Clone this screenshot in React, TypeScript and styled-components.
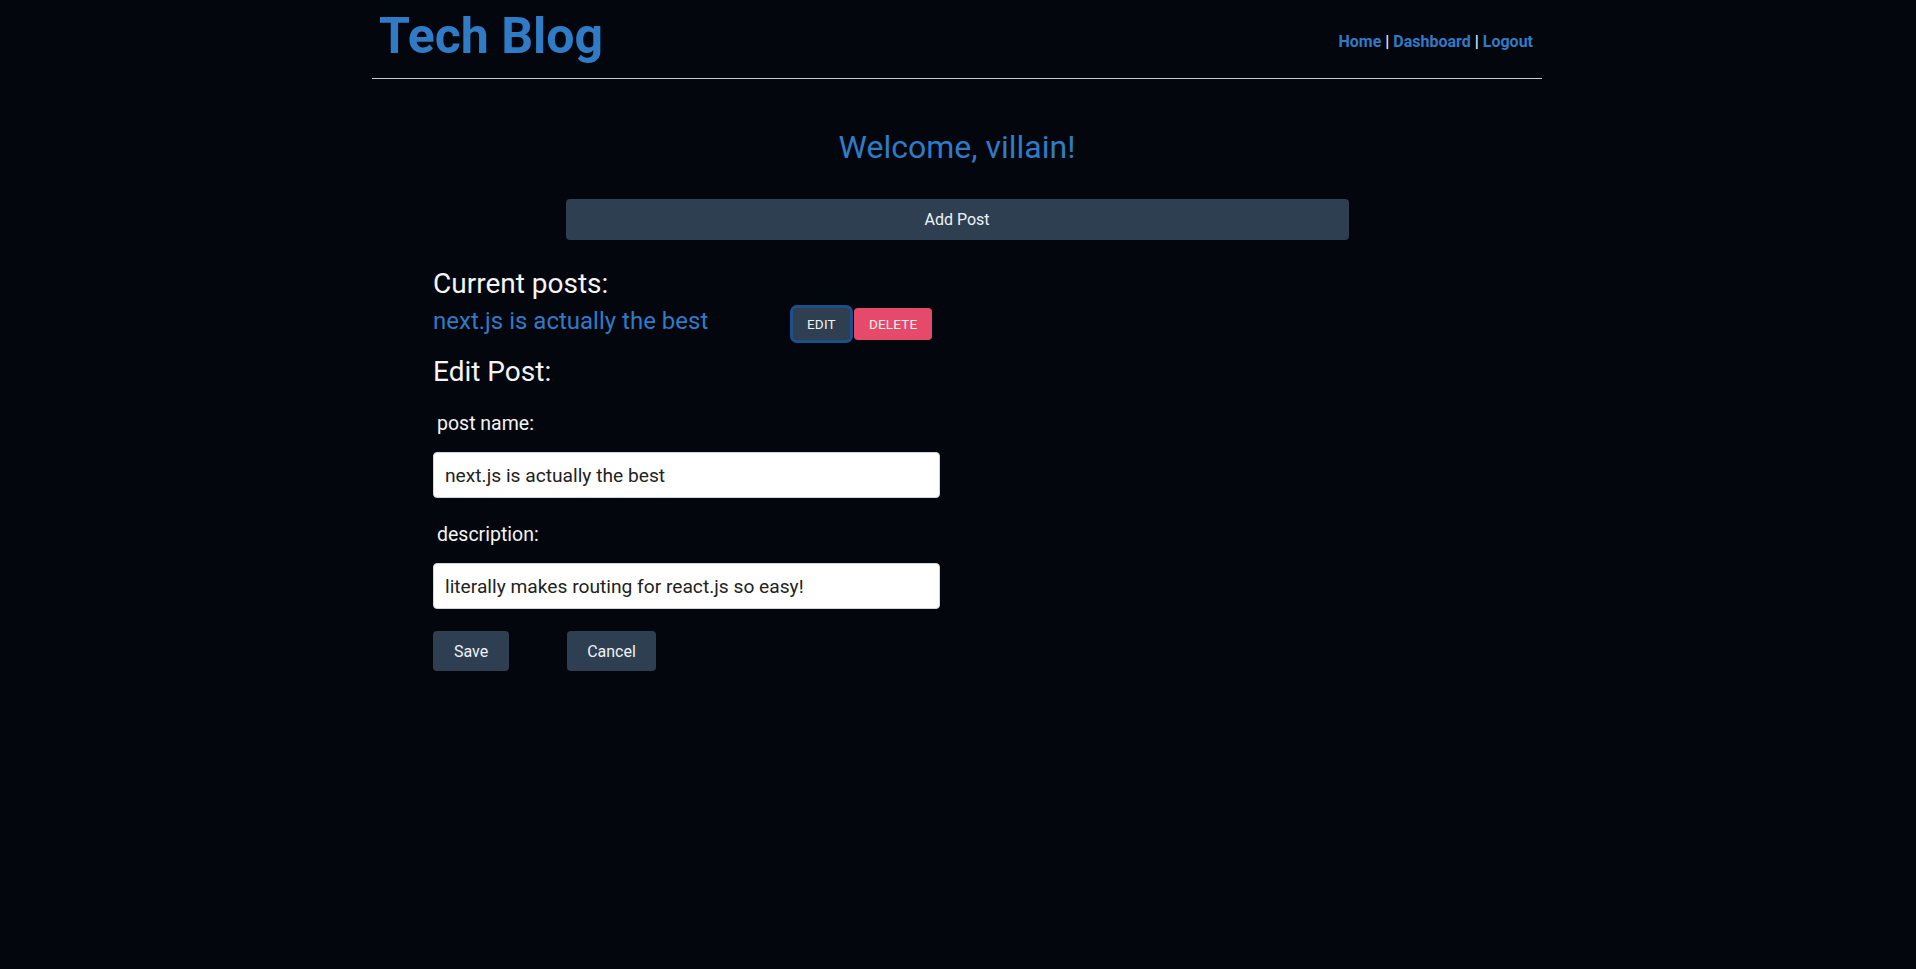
import React from "react";
import styled, { createGlobalStyle } from "styled-components";

const GlobalStyle = createGlobalStyle`
  html, body {
    margin: 0;
    padding: 0;
    background: #03060d;
    font-family: Roboto, "Noto Sans", "Liberation Sans", sans-serif;
    color: #f2f2f2;
  }
  body {
    min-height: 969px;
  }
  * { box-sizing: border-box; }
`;

const Page = styled.div`
  width: 1170px;
  margin: 0 auto;
  position: relative;
  left: -1px;
`;

const Header = styled.header`
  display: flex;
  justify-content: space-between;
  align-items: flex-start;
  padding: 5px 9px 11px 7px;
  border-bottom: 1px solid #c9ccd1;
`;

const Brand = styled.h1`
  margin: 0;
  font-size: 50px;
  line-height: 62px;
  font-weight: 700;
  color: #2f7bc6;
`;

const Nav = styled.nav`
  margin-top: 27px;
  font-size: 16px;
  line-height: 19px;
  font-weight: 700;
  color: #e6eef7;
`;

const NavLink = styled.a`
  color: #2f7bc6;
  text-decoration: none;
`;

const Main = styled.main`
  display: flex;
  flex-direction: column;
  align-items: center;
`;

const Welcome = styled.h2`
  margin: 49px 0 33px;
  font-size: 32px;
  line-height: 38px;
  font-weight: 400;
  color: #2f7bc6;
`;

const WideButton = styled.button`
  width: 783px;
  height: 41px;
  border: none;
  border-radius: 4px;
  background: #2e3f52;
  color: #eef2f6;
  font-family: inherit;
  font-size: 16px;
`;

const Section = styled.section`
  align-self: stretch;
  padding-left: 61px;
  display: flex;
  flex-direction: column;
  align-items: flex-start;
`;

const SectionTitle = styled.h3<{ $top: number }>`
  margin: ${(p) => p.$top}px 0 0;
  font-size: 28px;
  line-height: 34px;
  font-weight: 400;
  color: #f4f4f4;
`;

const PostRow = styled.div`
  display: flex;
  align-items: center;
  margin-top: 6px;
`;

const PostTitle = styled.a`
  width: 358px;
  padding-bottom: 4px;
  font-size: 24px;
  line-height: 29px;
  color: #2f7bc6;
  text-decoration: none;
`;

const SmallButton = styled.button<{ $variant: "edit" | "delete" }>`
  height: 32px;
  padding: 0 ${(p) => (p.$variant === "edit" ? "14px" : "15px")};
  margin: ${(p) => (p.$variant === "edit" ? "0 4px 0 2px" : "0")};
  border: none;
  border-radius: 4px;
  font-family: inherit;
  font-size: 13.5px;
  letter-spacing: 0.2px;
  text-transform: uppercase;
  color: #f1f1f1;
  background: ${(p) => (p.$variant === "edit" ? "#2e3f52" : "#e54a6b")};
  box-shadow: ${(p) => (p.$variant === "edit" ? "0 0 0 3px #1d4f8a" : "none")};
`;

const Form = styled.form`
  display: flex;
  flex-direction: column;
  align-items: flex-start;
`;

const FieldLabel = styled.label<{ $top: number }>`
  margin: ${(p) => p.$top}px 0 0 4px;
  font-size: 19.5px;
  line-height: 23px;
  color: #f4f4f4;
`;

const TextInput = styled.input`
  margin-top: 17px;
  width: 507px;
  height: 46px;
  padding: 0 11px;
  border: 1px solid #cfd4da;
  border-radius: 4px;
  background: #ffffff;
  color: #222;
  font-family: inherit;
  font-size: 19.2px;
  outline: none;
`;

const ActionRow = styled.div`
  display: flex;
  gap: 58px;
  margin-top: 22px;
`;

const ActionButton = styled.button<{ $w: number }>`
  width: ${(p) => p.$w}px;
  height: 40px;
  border: none;
  border-radius: 4px;
  background: #2e3f52;
  color: #eef2f6;
  font-family: inherit;
  font-size: 16px;
`;

export default function App() {
  return (
    <>
      <GlobalStyle />
      <Page>
        <Header>
          <Brand>Tech Blog</Brand>
          <Nav>
            <NavLink href="#">Home</NavLink> | <NavLink href="#">Dashboard</NavLink> |{" "}
            <NavLink href="#">Logout</NavLink>
          </Nav>
        </Header>
        <Main>
          <Welcome>Welcome, villain!</Welcome>
          <WideButton type="button">Add Post</WideButton>
          <Section>
            <SectionTitle $top={27}>Current posts:</SectionTitle>
            <PostRow>
              <PostTitle href="#">next.js is actually the best</PostTitle>
              <SmallButton $variant="edit" type="button">Edit</SmallButton>
              <SmallButton $variant="delete" type="button">Delete</SmallButton>
            </PostRow>
            <SectionTitle $top={15}>Edit Post:</SectionTitle>
            <Form onSubmit={(e) => e.preventDefault()}>
              <FieldLabel $top={23} htmlFor="post-name">post name:</FieldLabel>
              <TextInput id="post-name" defaultValue="next.js is actually the best" />
              <FieldLabel $top={25} htmlFor="post-desc">description:</FieldLabel>
              <TextInput id="post-desc" defaultValue="literally makes routing for react.js so easy!" />
              <ActionRow>
                <ActionButton $w={76} type="submit">Save</ActionButton>
                <ActionButton $w={89} type="button">Cancel</ActionButton>
              </ActionRow>
            </Form>
          </Section>
        </Main>
      </Page>
    </>
  );
}
